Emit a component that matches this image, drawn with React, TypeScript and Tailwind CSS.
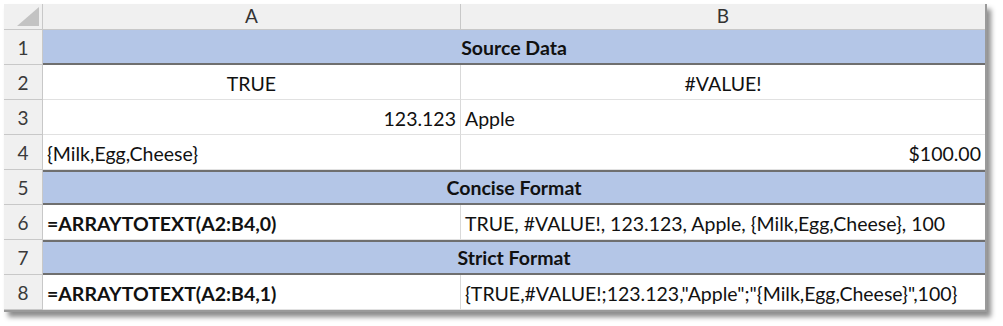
const font = { fontFamily: '"Lato", "Liberation Sans", sans-serif' };

function RowHead({ n }: { n: number }) {
	return (
		<div className="flex items-end justify-center pb-[5px] bg-[#f0f0f0] border-r border-b border-[#c8c8c8] text-[#3a3a3a] text-[19px] leading-[23px]">
			{n}
		</div>
	);
}

function Cell({
	children,
	align = "left",
	bold = false,
	last = false,
}: {
	children?: React.ReactNode;
	align?: "left" | "center" | "right";
	bold?: boolean;
	last?: boolean;
}) {
	const justify =
		align === "center" ? "justify-center" : align === "right" ? "justify-end" : "justify-start";
	return (
		<div
			className={`flex items-end ${justify} px-[4px] pb-[4px] bg-white border-b border-[#e1e1e1] text-[19.5px] leading-[23px] text-[#111] whitespace-nowrap overflow-hidden ${
				bold ? "font-bold" : ""
			} ${last ? "" : "border-r border-r-[#d9d9d9]"}`}
		>
			{children}
		</div>
	);
}

function Band({ children, top = true }: { children: React.ReactNode; top?: boolean }) {
	return (
		<div
			className={`col-span-2 flex items-end justify-center pb-[4px] bg-[#b4c6e7] border-b-2 border-b-[#6f6f6f] ${
				top ? "border-t-2 border-t-[#6f6f6f]" : ""
			} text-[19.5px] leading-[23px] font-bold text-[#111]`}
		>
			{children}
		</div>
	);
}

export default function App() {
	return (
		<div className="min-h-screen bg-white pt-[4px] pl-[4px]" style={font}>
			<div className="w-[983px] border-r-2 border-b-2 border-[#9a9a9a] shadow-[4px_5px_5px_rgba(0,0,0,0.45)]">
				<div className="grid grid-cols-[39px_418px_524px] grid-rows-[26px_repeat(8,35px)]">
					{/* corner */}
					<div className="relative bg-[#f0f0f0] border-r border-b border-[#c8c8c8]">
						<svg className="absolute right-[3px] bottom-[3px]" width="22" height="19" viewBox="0 0 22 19">
							<polygon points="22,0 22,19 0,19" fill="#c3c3c3" />
						</svg>
					</div>
					<div className="flex items-end justify-center pb-[2px] bg-[#f0f0f0] border-r border-b border-[#c8c8c8] text-[19px] leading-[23px] text-[#333]">
						A
					</div>
					<div className="flex items-end justify-center pb-[2px] bg-[#f0f0f0] border-b border-[#c8c8c8] text-[19px] leading-[23px] text-[#333]">
						B
					</div>

					<RowHead n={1} />
					<Band top={false}>Source Data</Band>

					<RowHead n={2} />
					<Cell align="center">TRUE</Cell>
					<Cell align="center" last>#VALUE!</Cell>

					<RowHead n={3} />
					<Cell align="right">123.123</Cell>
					<Cell last>Apple</Cell>

					<RowHead n={4} />
					<Cell>{"{Milk,Egg,Cheese}"}</Cell>
					<Cell align="right" last>$100.00</Cell>

					<RowHead n={5} />
					<Band>Concise Format</Band>

					<RowHead n={6} />
					<Cell bold>=ARRAYTOTEXT(A2:B4,0)</Cell>
					<Cell last>TRUE, #VALUE!, 123.123, Apple, {"{Milk,Egg,Cheese}"}, 100</Cell>

					<RowHead n={7} />
					<Band>Strict Format</Band>

					<RowHead n={8} />
					<Cell bold>=ARRAYTOTEXT(A2:B4,1)</Cell>
					<Cell last>{'{TRUE,#VALUE!;123.123,"Apple";"{Milk,Egg,Cheese}",100}'}</Cell>
				</div>
			</div>
		</div>
	);
}
